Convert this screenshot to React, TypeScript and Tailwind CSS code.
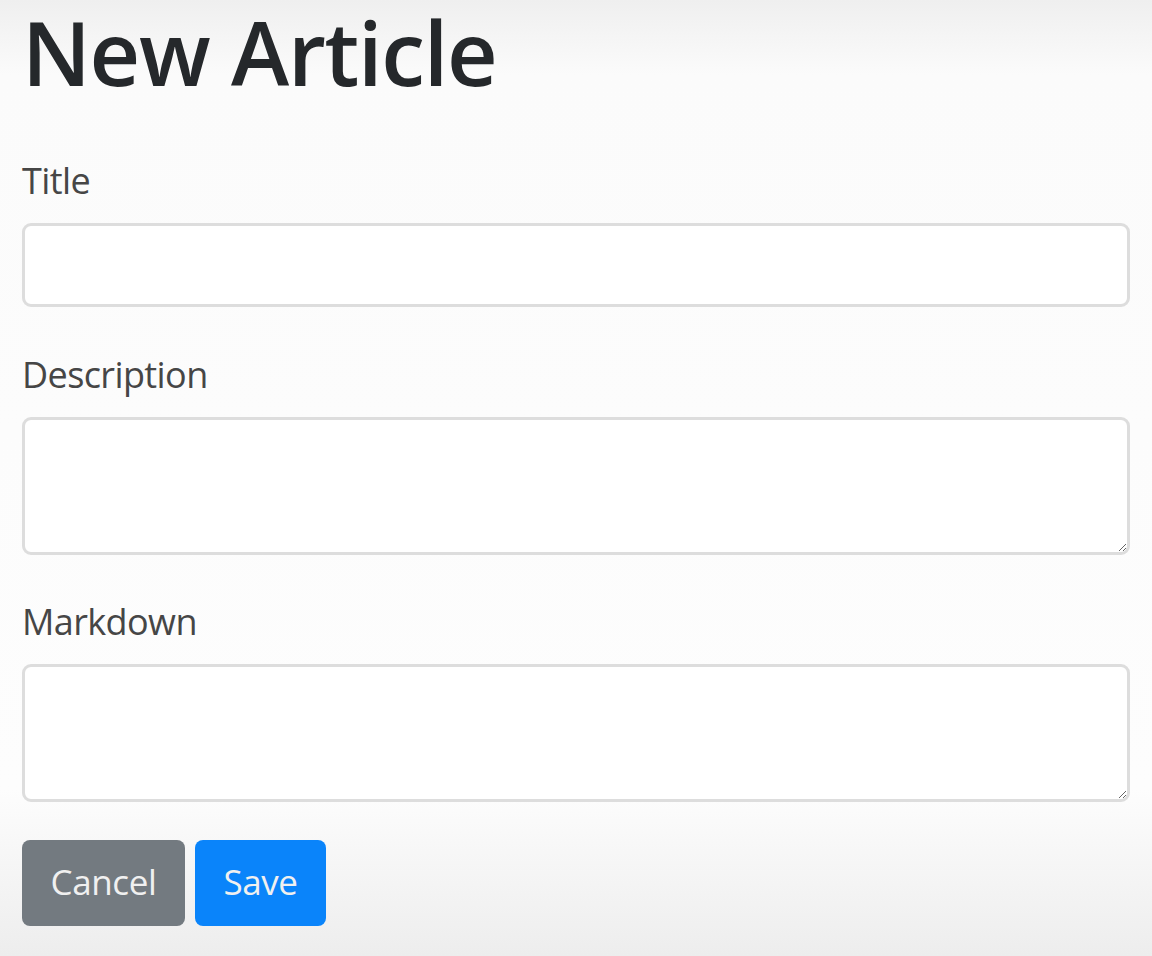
export default function App() {
    return (
        <div className="min-h-screen w-full bg-[linear-gradient(to_bottom,#efefef_0px,#fbfbfb_75px,#fdfdfd_790px,#ededed_956px)] px-[22px] font-['Open_Sans',sans-serif]">
            <h1 className="text-[88px] font-semibold leading-[1.2] tracking-[-1.3px] text-[#25282b]">New Article</h1>
            <div className="mt-[51px] flex flex-col">
                <label className="text-[36px] leading-[48px] tracking-[-0.6px] text-[#464646]">Title</label>
                <input className="mt-[18px] h-[84px] w-full rounded-[9px] border-[3px] border-[#dddddd] bg-white" />
                <label className="mt-[44px] text-[36px] leading-[48px] tracking-[-0.6px] text-[#464646]">Description</label>
                <textarea className="mt-[18px] h-[138px] w-full rounded-[9px] border-[3px] border-[#dddddd] bg-white" />
                <label className="mt-[43px] text-[36px] leading-[48px] tracking-[-0.6px] text-[#464646]">Markdown</label>
                <textarea className="mt-[18px] h-[138px] w-full rounded-[9px] border-[3px] border-[#dddddd] bg-white" />
            </div>
            <div className="mt-[38px] flex gap-[10px]">
                <button className="h-[86px] w-[163px] rounded-[8px] bg-[#737a80] text-[35px] tracking-[-0.4px] text-[#f0f0f0]">Cancel</button>
                <button className="h-[86px] w-[131px] rounded-[8px] bg-[#0a84fa] text-[35px] tracking-[-0.4px] text-[#f0f0f0]">Save</button>
            </div>
        </div>
    )
}
